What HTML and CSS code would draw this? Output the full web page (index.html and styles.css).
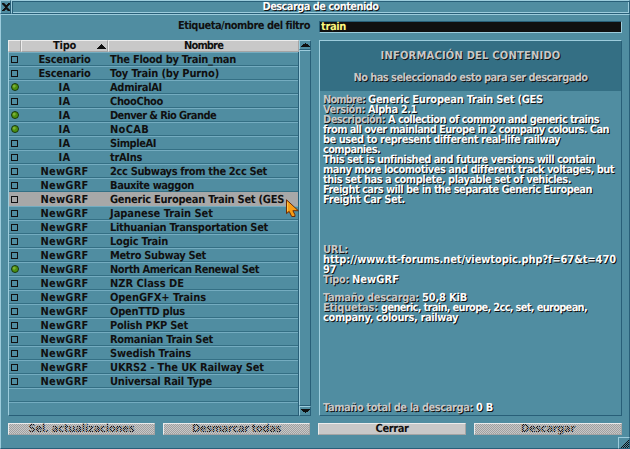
FILE: index.html
```html
<!DOCTYPE html>
<html lang="es">
<head>
<meta charset="utf-8">
<title>Descarga de contenido</title>
<link rel="stylesheet" href="styles.css">
</head>
<body>
<div class="window">
  <div class="titlebar">
    <div class="close"><svg width="8" height="8" viewBox="0 0 8 8" shape-rendering="crispEdges"><path d="M0 0h2v1h1v1h2V1h1V0h2v1H7v1H6v1H5v2h1v1h1v1h1v1H6V7H5V6H3v1H2v1H0V7h1V6h1V5h1V3H2V2H1V1H0z" fill="#101010" stroke="#101010" stroke-width=".6"/></svg></div>
    <div class="caption"><span class="lit" data-w="116">Descarga de contenido</span></div>
  </div>
  <div class="body">
    <div class="filter">
      <div class="filter-label"><span data-w="132">Etiqueta/nombre del filtro</span></div>
      <div class="edit"><span data-w="25">train</span></div>
    </div>
    <div class="main">
      <div class="list">
        <div class="head">
          <div class="h h-check"></div>
          <div class="h h-type"><span data-w="23">Tipo</span><svg class="sort" width="9" height="5" viewBox="0 0 9 5" shape-rendering="crispEdges"><path d="M4 0h1v1h1v1h1v1h1v1h1v1H0V4h1V3h1V2h1V1h1z" fill="#101010"/></svg></div>
          <div class="h h-name"><span data-w="39">Nombre</span></div>
        </div>
        <div class="rows" id="rows"></div>
      </div>
      <div class="scroll">
        <div class="sb up"><svg width="9" height="4" viewBox="0 0 9 4" shape-rendering="crispEdges"><path d="M4 0h1v1h2v1h1v1h1v1H0V3h1V2h1V1h2z" fill="#101010"/></svg></div>
        <div class="track"></div>
        <div class="sb down"><svg width="9" height="4" viewBox="0 0 9 4" shape-rendering="crispEdges"><path d="M0 0h9v1H8v1H7v1H5v1H4V3H2V2H1V1H0z" fill="#101010"/></svg></div>
      </div>
      <div class="info">
        <div class="info-head">
          <p><span class="lit grey" data-w="180">INFORMACIÓN DEL CONTENIDO</span></p>
          <p><span class="lit grey" data-w="234">No has seleccionado esto para ser descargado</span></p>
        </div>
        <div class="details">
          <p><b data-w="42">Nombre:</b><span data-w="175">Generic European Train Set (GES</span></p>
          <p><b data-w="42">Versión:</b><span data-w="49">Alpha 2.1</span></p>
          <p><b data-w="62">Descripción:</b><span data-w="211">A collection of common and generic trains</span></p>
          <p><span data-w="286">from all over mainland Europe in 2 company colours. Can</span></p>
          <p><span data-w="237">be used to represent different real-life railway</span></p>
          <p><span data-w="57">companies.</span></p>
          <p><span data-w="272">This set is unfinished and future versions will contain</span></p>
          <p><span data-w="291">many more locomotives and different track voltages, but</span></p>
          <p><span data-w="248">this set has a complete, playable set of vehicles.</span></p>
          <p><span data-w="269">Freight cars will be in the separate Generic European</span></p>
          <p class="end-desc"><span data-w="82">Freight Car Set.</span></p>
          <p><b data-w="25">URL:</b></p>
          <p><span data-w="293">http://www.tt-forums.net/viewtopic.php?f=67&amp;t=470</span></p>
          <p><span data-w="13">97</span></p>
          <p class="end-type"><b data-w="26">Tipo:</b><span data-w="47">NewGRF</span></p>
          <p><b data-w="96">Tamaño descarga:</b><span data-w="45">50,8 KiB</span></p>
          <p><b data-w="55">Etiquetas:</b><span data-w="206">generic, train, europe, 2cc, set, european,</span></p>
          <p><span data-w="135">company, colours, railway</span></p>
          <p class="total"><b data-w="150">Tamaño total de la descarga:</b><span data-w="17">0 B</span></p>
        </div>
      </div>
    </div>
    <div class="buttons">
      <div class="btn off"><span data-w="106">Sel. actualizaciones</span></div>
      <div class="btn off"><span data-w="89">Desmarcar todas</span></div>
      <div class="btn"><span data-w="33">Cerrar</span></div>
      <div class="btn off"><span data-w="54">Descargar</span></div>
    </div>
    <div class="resize"><svg width="8" height="8" viewBox="0 0 8 8" shape-rendering="crispEdges"><path d="M7 0h1v1H7zM6 1h1v1H6zM5 2h1v1H5zM4 3h1v1H4zM3 4h1v1H3zM2 5h1v1H2zM1 6h1v1H1zM0 7h1v1H0zM7 2h1v1H7zM6 3h1v1H6zM5 4h1v1H5zM4 5h1v1H4zM3 6h1v1H3zM2 7h1v1H2zM7 4h1v1H7zM6 5h1v1H6zM5 6h1v1H5zM4 7h1v1H4zM7 6h1v1H7zM6 7h1v1H6z" fill="#101010"/></svg></div>
  </div>
  <svg class="cursor" width="13" height="19" viewBox="0 0 13 19"><path d="M.5 .8V14.6L3.2 12.4 5.7 17.5H9L8.8 15.4 6.9 11.7H12.3z" fill="#f89c14" stroke="#6a2c08" stroke-width="1"/><path d="M1.6 3.5V12" stroke="#fcc850" stroke-width="1"/></svg>
</div>
<script src="list.js"></script>
</body>
</html>
```
FILE: styles.css
```css
* { box-sizing: border-box; margin: 0; padding: 0; }
body {
  width: 630px; height: 449px; overflow: hidden;
  background: #508da1; color: #101010;
  font: bold 11px/10px "DejaVu Sans Condensed", "DejaVu Sans", sans-serif;
  font-stretch: condensed;
  text-rendering: geometricPrecision;
}
span, b { white-space: pre; display: block; flex: none; }
svg { display: block; }
.window { position: relative; width: 630px; height: 449px; display: flex; flex-direction: column; }
.lit, .details { color: #fcfcfc; text-shadow: 1px 1px 0 #101010; }
.grey, .details b { color: #c8c8c8; }

.titlebar { display: flex; height: 14px; }
.close, .caption, .body, .sb, .track, .info, .resize {
  border: 1px solid; border-color: #9cccdc #285f78 #285f78 #9cccdc;
}
.close { width: 11px; padding: 2px 0 0 1px; }
.caption {
  flex: 1; display: flex; justify-content: center; padding-top: 1px;
  box-shadow: inset 1px 1px #285f78, inset -1px -1px #9cccdc;
}
.body { flex: 1; padding: 6px 7px 0; position: relative; }

.filter { display: flex; height: 12px; gap: 9px; }
.filter-label { width: 302px; display: flex; justify-content: flex-end; }
.edit {
  width: 303px; background: #101010; color: #fcf880; padding-left: 1px;
  border: 1px solid; border-color: #285f78 #9cccdc #9cccdc #285f78;
}
.main { display: flex; height: 376px; margin-top: 7px; }
.list { width: 291px; }
.head { display: flex; height: 12px; }
.h {
  position: relative; display: flex; justify-content: center; background: #c8c8c8;
  border: 1px solid; border-color: #ececec #a4a4a4 #a4a4a4 #ececec;
}
.h-check { width: 13px; }
.h-type { width: 87px; }
.h-name { width: 191px; }
.sort { position: absolute; right: 1px; top: 3px; }
.rows { height: 364px; border-left: 1px solid #9cccdc; border-right: 1px solid #285f78; border-bottom: 1px solid #285f78; }
.row { height: 14px; display: flex; border-top: 1px solid #74acc0; border-bottom: 1px solid #346f84; }
.row:last-child { height: 13px; border-bottom: 0; }
.row.sel { background: #a8a8a8; border-color: #a8a8a8; }
.mark { width: 12px; padding: 3px 0 0 2px; }
.box { width: 7px; height: 7px; border: 1px solid #101010; }
.dot {
  width: 8px; height: 8px; margin-top: -1px; border: 1px solid #173808; border-radius: 50%;
  background: radial-gradient(circle at 35% 35%, #7cb038 0 1px, #4c9010 2px);
}
.type { width: 87px; display: flex; justify-content: center; padding-top: 2px; }
.name { padding: 2px 0 0 2px; }

.scroll { width: 12px; display: flex; flex-direction: column; }
.sb { height: 10px; padding: 2px 0 0 1px; }
.track { flex: 1; }
.info { width: 303px; margin-left: 8px; }
.info-head { height: 50px; background: #346f84; padding-top: 10px; }
.info-head p { display: flex; justify-content: center; height: 22px; }
.details { padding: 4px 0 0 3px; }
.details p { display: flex; gap: 3px; height: 10px; }
.details .end-desc { margin-bottom: 40px; }
.details .end-type { margin-bottom: 8px; }
.details .total { margin-top: 80px; }

.buttons { display: grid; grid-template-columns: 147px 147px 148px 148px; gap: 8px; margin-top: 7px; height: 12px; }
.btn {
  position: relative; display: flex; justify-content: center; background: #c8c8c8;
  border: 1px solid; border-color: #ececec #a4a4a4 #a4a4a4 #ececec;
}
.btn.off::after {
  content: ""; position: absolute; inset: 0;
  background: repeating-conic-gradient(#a0a0a0 0 25%, transparent 0 50%) 0 0 / 2px 2px;
}
.resize { position: absolute; right: -1px; bottom: -1px; width: 12px; height: 12px; padding: 2px; }
.cursor { position: absolute; left: 286px; top: 199px; }
```
FILE: list.js
```js
// type, name, drawn width of the name, already installed
const items = [
  ["Escenario", "The Flood by Train_man", 126],
  ["Escenario", "Toy Train (by Purno)", 109],
  ["IA", "AdmiralAI", 52, true],
  ["IA", "ChooChoo", 53],
  ["IA", "Denver & Rio Grande", 106, true],
  ["IA", "NoCAB", 39, true],
  ["IA", "SimpleAI", 46],
  ["IA", "trAIns", 32],
  ["NewGRF", "2cc Subways from the 2cc Set", 157],
  ["NewGRF", "Bauxite waggon", 84],
  ["NewGRF", "Generic European Train Set (GES", 174],
  ["NewGRF", "Japanese Train Set", 103],
  ["NewGRF", "Lithuanian Transportation Set", 158],
  ["NewGRF", "Logic Train", 58],
  ["NewGRF", "Metro Subway Set", 96],
  ["NewGRF", "North American Renewal Set", 149, true],
  ["NewGRF", "NZR Class DE", 74],
  ["NewGRF", "OpenGFX+ Trains", 96],
  ["NewGRF", "OpenTTD plus", 75],
  ["NewGRF", "Polish PKP Set", 78],
  ["NewGRF", "Romanian Train Set", 103],
  ["NewGRF", "Swedish Trains", 81],
  ["NewGRF", "UKRS2 - The UK Railway Set", 154],
  ["NewGRF", "Universal Rail Type", 102],
  null,
  null
];
const typeWidths = { Escenario: 52, IA: 12, NewGRF: 48 };

function add(parent, tag, className, text, width) {
  const el = document.createElement(tag);
  if (className) el.className = className;
  if (text) el.textContent = text;
  if (width) el.dataset.w = width;
  parent.appendChild(el);
  return el;
}

const rows = document.getElementById("rows");
items.forEach((item, i) => {
  const row = add(rows, "div", i === 10 ? "row sel" : "row");
  if (!item) return;
  const [type, name, width, installed] = item;
  add(add(row, "div", "mark"), "div", installed ? "dot" : "box");
  add(add(row, "div", "type"), "span", "", type, typeWidths[type]);
  add(add(row, "div", "name"), "span", "", name, width);
});

// Track each text so that it fills its width
document.querySelectorAll("[data-w]").forEach(el => {
  el.style.width = "max-content";
  const natural = el.getBoundingClientRect().width;
  const target = Number(el.dataset.w);
  el.style.letterSpacing = (target - natural) / el.textContent.length + "px";
  el.style.width = target + "px";
});
```
